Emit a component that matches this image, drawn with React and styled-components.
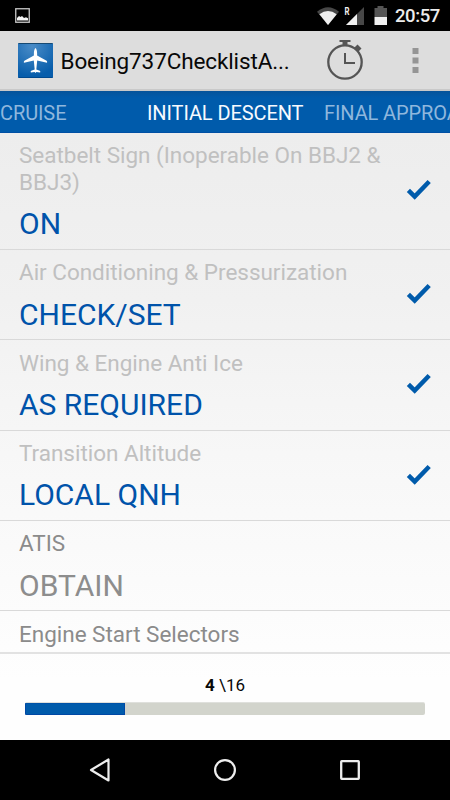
import React from "react";
import styled, { createGlobalStyle } from "styled-components";

const GlobalStyle = createGlobalStyle`
  * { box-sizing: border-box; }
  body { margin: 0; background: #000; font-family: Roboto, "Noto Sans", sans-serif; }
  svg { display: block; flex: none; }
`;

const Screen = styled.div`
  width: 450px;
  height: 800px;
  display: flex;
  flex-direction: column;
  overflow: hidden;
  background: linear-gradient(#e8e8e8 31px, #ededed 133px, #f1f1f1 300px, #f8f8f8 480px, #fefefe 680px);
`;

const StatusBar = styled.header`
  height: 31px;
  flex: none;
  display: flex;
  align-items: center;
  padding: 0 10px 0 15px;
  background: #000;
`;

const StatusIcons = styled.div`
  margin-left: auto;
  display: flex;
`;

const Clock = styled.span`
  width: 45px;
  margin-left: 8px;
  color: #ececec;
  font-size: 18.5px;
  line-height: 31px;
  font-weight: 500;
  letter-spacing: -0.4px;
  white-space: nowrap;
  padding-top: 2px;
`;

const ActionBar = styled.div`
  height: 60px;
  flex: none;
  display: flex;
  align-items: center;
  padding: 1px 31px 0 18px;
  background: #dddddd;
  border-bottom: 2px solid #c9c9c9;
`;

const Title = styled.h1`
  flex: none;
  margin: 0 0 0 6.5px;
  width: 264.5px;
  color: #080808;
  font-size: 22.5px;
  line-height: 30px;
  font-weight: 400;
  letter-spacing: -0.12px;
  white-space: nowrap;
`;

const OverflowButton = styled.div`
  margin-left: auto;
`;

const Tabs = styled.nav`
  height: 42px;
  flex: none;
  display: flex;
  align-items: center;
  gap: 21px;
  overflow: hidden;
  background: linear-gradient(#06539a, #005bab 7px);
  border-bottom: 1px solid #0050a4;
`;

const Tab = styled.span`
  flex: none;
  width: ${(p) => p.$width}px;
  padding-top: 3px;
  color: ${(p) => (p.$active ? "#f7faff" : "#8fb7dd")};
  font-size: 20px;
  line-height: 26px;
  letter-spacing: -0.1px;
  white-space: nowrap;
`;

const Checklist = styled.main`
  height: 519px;
  flex: none;
  overflow: hidden;
`;

const Item = styled.section`
  display: flex;
  align-items: center;
  justify-content: space-between;
  height: ${(p) => (p.$tall ? 116.8 : 90.4)}px;
  padding: 2px 18px 0 19px;
  border-bottom: 1px solid #d9d9d9;
`;

const ItemText = styled.div`
  width: 370px;
`;

const Label = styled.div`
  color: ${(p) => (p.$done ? "#c0c0c0" : "#8b8b8b")};
  font-size: 22.5px;
  line-height: 26.4px;
  letter-spacing: -0.02px;
`;

const Value = styled.div`
  margin-top: 11px;
  color: ${(p) => (p.$done ? "#0053aa" : "#8d8d8d")};
  font-size: 30px;
  line-height: 35.2px;
`;

const Footer = styled.footer`
  height: 88px;
  flex: none;
  padding: 19px 25px 0;
  border-top: 2px solid #e2e2e2;
`;

const Count = styled.div`
  color: #080808;
  font-size: 17px;
  line-height: 24px;
  text-align: center;
`;

const Track = styled.div`
  height: 13px;
  margin-top: 5px;
  border-radius: 2px;
  overflow: hidden;
  background: #d2d4cc;
  border-top: 1px solid #dfe0dc;
`;

const Fill = styled.div`
  height: 100%;
  background: #005bab;
  border: 1px solid #0048a5;
  border-top-color: #0052a8;
`;

const NavBar = styled.nav`
  height: 60px;
  flex: none;
  display: flex;
  justify-content: center;
  align-items: center;
  gap: 95px;
  background: #000;
`;

const CheckIcon = styled.svg`
  margin-bottom: 3px;
`;

const PhotoIcon = () => (
  <svg width="15" height="15" viewBox="0 0 15 15">
    <rect x=".75" y=".75" width="13.5" height="13.5" fill="none" stroke="#c8c8c8" strokeWidth="1.3" />
    <path d="M2 12.5V10l2-2 1.5 1L7 8l2 2 2-.8 2 1v2.3Z" fill="#f2f2f2" />
  </svg>
);

const SignalIcons = () => (
  <svg width="72" height="26" viewBox="315 3 72 26">
    <path d="M317 11.8Q328 2.6 339 11.8L328 25Z" fill="#474747" />
    <path d="M319.4 14.3Q328 7.8 336.7 14.3L328 25Z" fill="#f0f0f0" />
    <path d="M364 7v18h-18Z" fill="#474747" />
    <path d="M357 14v11h-11Z" fill="#f0f0f0" />
    <text x="344.4" y="15" fill="#f0f0f0" fontSize="10" fontWeight="700" textLength="5" lengthAdjust="spacingAndGlyphs">R</text>
    <path d="M374.5 8h3V6h6v2h3.5v9h-12.5Z" fill="#555" />
    <path d="M374.5 17H387v8h-12.5Z" fill="#f0f0f0" />
  </svg>
);

const PlaneLogo = () => (
  <svg width="36" height="37" viewBox="0 0 36 37">
    <defs>
      <radialGradient id="sky" cx=".4" cy=".1" r=".85">
        <stop offset="0" stopColor="#4a8cc7" />
        <stop offset="1" stopColor="#075dab" />
      </radialGradient>
    </defs>
    <rect x="0" y="1" width="35" height="35" rx="1" fill="url(#sky)" />
    <path d="M.5 1.5h34" stroke="#174a73" strokeWidth="1" />
    <path d="M.5 35.5h34" stroke="#00498f" strokeWidth="1" />
    <path
      d="M17.5 6c1 1 1.5 2.500 1.600 5v2.500l9.500 5.300c.6.500.7 1.200.4 2l-9.800-2.400-.9 9 3.500 1.400c.6.400.6 1 .3 1.600l-3.700-.5-.9 1-.9-1-3.700.5c-.3-.6-.3-1.200.3-1.600l3.500-1.400-.9-9L6 20.800c-.3-.8-.2-1.500.4-2l9.500-5.300V11c.1-2.500.6-4 1.600-5Z"
      fill="#fff"
    />
  </svg>
);

const Stopwatch = () => (
  <svg width="40" height="44" viewBox="325 40 40 44">
    <circle cx="345" cy="63" r="16.7" fill="none" stroke="#555" strokeWidth="2.3" />
    <path d="M339.5 42h11" fill="none" stroke="#555" strokeWidth="2" />
    <path d="M342.5 42h5v4.500h-5Z" fill="#555" />
    <path d="m354 49 3.500-3.500 4 4-3.500 3.500Z" fill="#555" />
    <path d="M345 54v10h10" fill="none" stroke="#555" strokeWidth="2" />
  </svg>
);

const Overflow = () => (
  <svg width="7" height="26" viewBox="0 0 7 26">
    <path d="M.5 0h6v6h-6ZM.5 9.500h6v6h-6ZM.5 19h6v6h-6Z" fill="#959595" />
  </svg>
);

const Check = () => (
  <CheckIcon width="26" height="22" viewBox="0 0 26 22">
    <path d="m2.400 11.300 6.300 6.300L23.200 2.500" fill="none" stroke="#005bab" strokeWidth="4.500" />
  </CheckIcon>
);

const NavIcons = () => (
  <>
    <svg width="30" height="30" viewBox="85 755 30 30">
      <path d="M108.500 759.500v21L91 770Z" fill="none" stroke="#eee" strokeWidth="2.200" strokeLinejoin="round" />
    </svg>
    <svg width="30" height="30" viewBox="210 755 30 30">
      <circle cx="225" cy="770" r="9.900" fill="none" stroke="#eee" strokeWidth="2.200" />
    </svg>
    <svg width="30" height="30" viewBox="335 755 30 30">
      <rect x="341.200" y="761.200" width="17.600" height="17.600" rx=".5" fill="none" stroke="#eee" strokeWidth="2.300" />
    </svg>
  </>
);

const items = [
  { label: "Seatbelt Sign (Inoperable On BBJ2 & BBJ3)", value: "ON", done: true, tall: true },
  { label: "Air Conditioning & Pressurization", value: "CHECK/SET", done: true },
  { label: "Wing & Engine Anti Ice", value: "AS REQUIRED", done: true },
  { label: "Transition Altitude", value: "LOCAL QNH", done: true },
  { label: "ATIS", value: "OBTAIN" },
  { label: "Engine Start Selectors", value: "" },
];

const completed = items.filter((item) => item.done).length;
const total = 16;

export default function App() {
  return (
    <>
      <GlobalStyle />
      <Screen>
        <StatusBar>
          <PhotoIcon />
          <StatusIcons><SignalIcons /></StatusIcons>
          <Clock>20:57</Clock>
        </StatusBar>
        <ActionBar>
          <PlaneLogo />
          <Title>Boeing737ChecklistA...</Title>
          <Stopwatch />
          <OverflowButton><Overflow /></OverflowButton>
        </ActionBar>
        <Tabs>
          <Tab $width={126}>CRUISE</Tab>
          <Tab $width={156} $active>INITIAL DESCENT</Tab>
          <Tab $width={180}>FINAL APPROACH</Tab>
        </Tabs>
        <Checklist>
          {items.map((item) => (
            <Item key={item.label} $tall={item.tall}>
              <ItemText>
                <Label $done={item.done}>{item.label}</Label>
                <Value $done={item.done}>{item.value || "\u00a0"}</Value>
              </ItemText>
              {item.done && <Check />}
            </Item>
          ))}
        </Checklist>
        <Footer>
          <Count><b>{completed}</b> \{total}</Count>
          <Track><Fill style={{ width: `${(completed / total) * 100}%` }} /></Track>
        </Footer>
        <NavBar><NavIcons /></NavBar>
      </Screen>
    </>
  );
}
